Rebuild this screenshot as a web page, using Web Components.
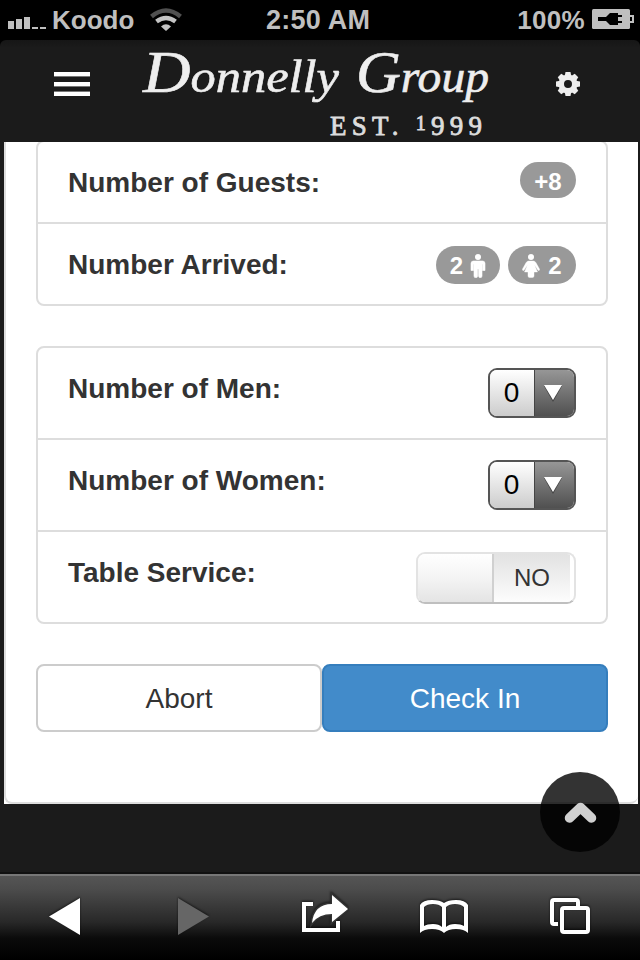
<!DOCTYPE html>
<html lang="en">
<head>
<meta charset="utf-8">
<title>Check In</title>
<style>
html,body{margin:0;padding:0}
body{width:640px;height:960px;overflow:hidden;background:#1b1b1b;font-family:"Liberation Sans",Arial,sans-serif;color:#333}
</style>
</head>
<body>
<guest-app></guest-app>
<script>
const define = (name, css, html) => customElements.define(name, class extends HTMLElement {
  constructor() {
    super();
    this.attachShadow({mode: 'open'}).innerHTML = `<style>*{box-sizing:border-box}svg{display:block;flex:none}${css}</style>${html}`;
  }
});

define('status-bar', `
:host{display:grid;grid-template-columns:266px 1fr auto;align-items:center;height:40px;background:#000;color:#bfbfbf;font:bold 26px/40px "Liberation Sans",sans-serif;padding:0 6px 0 0}
.l,.r{display:flex;align-items:center}
.l{padding-left:8px}.l svg+span{margin-left:6px;letter-spacing:0}.l span+svg{margin-left:16px}
.c{font-size:27px;letter-spacing:.25px}
.r{gap:7px}.r span{letter-spacing:.3px}`, `
<div class="l">
<svg width="38" height="40" fill="#bfbfbf"><path d="M0 21h6v8H0zM8 19h6v10H8zM16 17h6v12h-6zM24 27h6v2h-6zM32 27h6v2h-6z"/></svg>
<span>Koodo</span>
<svg width="32" height="40" fill="none"><path d="M1.500 16.500Q16 4.500 30.500 16.500" stroke="#505050" stroke-width="4.500"/><path d="M6.500 21.500Q16 14.500 25.500 21.500" stroke="#c4c4c4" stroke-width="4.500"/><path d="M11 26.500Q16 22 21 26.500L16 31z" fill="#c4c4c4"/></svg>
</div>
<div class="c">2:50 AM</div>
<div class="r"><span>100%</span>
<svg width="42" height="40"><rect y="9" width="38" height="20" rx="1.500" fill="#bfbfbf"/><path d="M38 16h3v6h-3" fill="none" stroke="#bfbfbf" stroke-width="2"/><path d="M6 17h8l4-4h8v2h4v2h-4v4h4v2h-4v2h-8l-4-4H6z" fill="#000"/></svg></div>`);

define('brand-logo', `:host{display:block;width:352px;height:96px}svg{overflow:visible}`, `
<svg width="352" height="96" fill="#eee" stroke="#eee" font-family="Liberation Serif, serif" font-style="italic">
<g stroke-width=".6"><text x="3" y="48" font-size="46" textLength="196" lengthAdjust="spacingAndGlyphs"><tspan font-size="60">D</tspan>onnelly</text>
<text x="216" y="48" font-size="46" textLength="133" lengthAdjust="spacingAndGlyphs"><tspan font-size="60">G</tspan>roup</text></g>
<text x="190" y="90.500" font-size="27" font-style="normal" fill="#ddd" stroke="#ddd" stroke-width=".8" textLength="152">EST. <tspan font-size="20" dy="-5">1</tspan><tspan dy="5">999</tspan></text>
</svg>`);

define('app-header', `
:host{display:grid;grid-template-columns:140px 352px 1fr;height:102px;background:linear-gradient(#161616,#1b1b1b 8px);border-radius:6px 6px 0 0}
.m{padding:32px 0 0 54px}.g{padding:30px 0 0 62px}brand-logo{margin-top:4px}`, `
<div class="m"><svg width="36" height="24"><path d="M0 0h36v4H0zM0 10h36v4H0zM0 20h36v4H0z" fill="#fff"/><path d="M0 4.500h36M0 14.500h36M0 19.500h36" stroke="#777"/></svg></div>
<brand-logo></brand-logo>
<div class="g"><svg width="28" height="28" viewBox="-14 -14 28 28"><g fill="#eee"><path d="M-2.500-12h5l.8 4h-6.600z"/><path d="M-2.500-12h5l.8 4h-6.600z" transform="rotate(45)"/><path d="M-2.500-12h5l.8 4h-6.600z" transform="rotate(90)"/><path d="M-2.500-12h5l.8 4h-6.600z" transform="rotate(135)"/><path d="M-2.500-12h5l.8 4h-6.600z" transform="rotate(180)"/><path d="M-2.500-12h5l.8 4h-6.600z" transform="rotate(225)"/><path d="M-2.500-12h5l.8 4h-6.600z" transform="rotate(270)"/><path d="M-2.500-12h5l.8 4h-6.600z" transform="rotate(315)"/></g><circle r="6.700" fill="none" stroke="#eee" stroke-width="5.400"/></svg></div>`);

define('list-group', `:host{display:block;border:2px solid #ddd;border-radius:8px;background:#fff}`, `<slot></slot>`);

define('list-row', `
:host{display:flex;justify-content:space-between;align-items:flex-start;height:92px;padding:20px 30px 0;border-top:2px solid #ddd}
:host(.first){border-top:0;height:90px}
:host(.short){height:82px}:host(.short.first){height:80px}
b{font-size:28px;line-height:42px;letter-spacing:0;white-space:nowrap}
.end{display:flex;gap:8px}`, `<b><slot name="label"></slot></b><div class="end"><slot></slot></div>`);

define('count-badge', `
:host{display:flex;align-items:center;justify-content:center;height:36px;min-width:56px;border-radius:20px;background:#999;color:#fff;font-size:24px;font-weight:bold;line-height:40px;padding-top:3px}
:host(.man){width:64px;height:38px;margin-top:2px;padding-top:1px}:host(.woman){width:68px;height:38px;margin-top:2px;padding-top:1px}`, `<slot></slot>`);

define('person-icon', `:host{display:block;width:18px;height:24px}:host([kind=man]){width:16px;margin-left:7px}:host([kind=woman]){margin-right:8px}.w{display:none}:host([kind=woman]) .w{display:block}:host([kind=woman]) .m{display:none}`, `
<svg class="m" width="16" height="24" fill="#fff"><circle cx="8" cy="3" r="3"/><path d="M3.500 7h9a2.500 2.500 0 0 1 2.500 2.500v7h-2.500v-6h-.5V22a1.700 1.700 0 0 1-3.400 0v-7h-1v7A1.700 1.700 0 0 1 4 22V10.500h-.5v6H1v-7A2.500 2.500 0 0 1 3.500 7z" stroke="#fff" stroke-width=".6"/></svg>
<svg class="w" width="18" height="24" fill="#fff"><circle cx="9" cy="3" r="3"/><path d="M6.500 7h5q1.500 0 2.500 1.800l3.600 6.400q.2 1.500-1.400 1.300L12.500 11l3 7h-3.500v4q-.2 1.500-1.500 1.500h-3Q6.200 23.500 6 22v-4H2.500l3-7-3.700 5.500Q.2 16.700.4 15.200L4 8.800Q5 7 6.500 7z" stroke="#fff" stroke-width=".4"/></svg>`);

define('select-box', `
:host{display:grid;grid-template-columns:44px 1fr;width:88px;height:50px;border:2px solid #555;border-radius:9px;overflow:hidden;font-size:28px;line-height:46px;color:#000}
.v{text-align:center;background:linear-gradient(#fff,#ccc);padding-right:1px}
.a{border-left:1px solid #444;background:linear-gradient(#969696,#505050);padding:14px 0 0 8px}`, `
<div class="v"><slot></slot></div><div class="a"><svg width="20" height="20"><path d="M1 2h18l-9 16z" fill="#444"/><path d="M1 1h18L10 16z" fill="#fff"/></svg></div>`);

define('toggle-switch', `
:host{display:grid;grid-template-columns:76px 76px 1fr;width:160px;height:52px;border:2px solid #e3e3e3;border-bottom-color:#bfbfbf;border-radius:9px;overflow:hidden;background:#fff;font-size:24px;line-height:48px;text-align:center}
.k{background:linear-gradient(#fff,#f4f4f4 50%,#e4e4e4);border-right:2px solid #d0d0d0}
.n{background:linear-gradient(#e2e2e2,#fdfdfd)}`, `<div class="k"></div><div class="n"><slot></slot></div>`);

define('action-button', `
:host{display:block;flex:1;height:68px;border:2px solid #ccc;border-radius:8px;background:#fff;text-align:center;font-size:28px;line-height:66px;color:#333}
:host([primary]){background:#428bca;border-color:#357ebd;color:#fff}`, `<slot></slot>`);

define('scroll-top', `
:host{position:absolute;left:540px;top:772px;width:80px;height:80px;border-radius:50%;background:rgba(0,0,0,.8)}`, `
<svg width="80" height="80"><path d="M29.500 46L40.500 35.500 51.500 46" fill="none" stroke="#d0d0d0" stroke-width="9.500" stroke-linecap="round" stroke-linejoin="round"/></svg>`);

define('tool-bar', `
:host{display:grid;grid-template-columns:128px 128px 128px 120px 132px;height:88px;border-top:2px solid #111;background:linear-gradient(#777 0 2px,#555 2px,#4c4c4c 15px,#282828 48px,#0b0b0b 64px,#000)}
div{display:flex;justify-content:center;padding-top:18px}
svg{filter:drop-shadow(0 -1px 1px #0009)}`, `
<div><svg width="50" height="50"><path d="M10 24.500L41 6v37z" fill="#fff"/></svg></div>
<div><svg width="50" height="50"><path d="M11 6l31 18.500L11 43z" fill="#666"/></svg></div>
<div><svg width="56" height="50"><path d="M21 12H12V38H46V29" fill="none" stroke="#fff" stroke-width="4"/><path d="M20 31Q22 12 40 12V3L56 17 40 30V22Q27 22 20 31z" fill="#fff" stroke="#333" stroke-width="3" paint-order="stroke"/></svg></div>
<div><svg width="50" height="50"><path d="M1 41V13Q4 8 13 8 21 8 25 11 29 8 37 8 46 8 49 13V41Q45 37 37 37 29 37 25 41 21 37 13 37 5 37 1 41zM5 34Q8 32 14 32 20 32 23 35V15Q20 12 14 12 8 12 5 15zM27 35Q30 32 36 32 42 32 45 34V15Q42 12 36 12 30 12 27 15z" fill="#fff" fill-rule="evenodd"/></svg></div>
<div><svg width="44" height="50" fill="none" stroke="#fff" stroke-width="4"><path d="M10 32H6Q4 32 4 30V10Q4 8 6 8H28Q30 8 30 10V14"/><rect x="14" y="16" width="26" height="24" rx="2"/></svg></div>`);

define('guest-app', `
:host{display:grid;grid-template-rows:40px 102px 730px 88px;width:640px;height:960px;position:relative;background:linear-gradient(#000 0 50px,#1b1b1b 50px)}
status-bar,app-header{position:relative;z-index:1}
.page{width:634px;height:664px;margin:-2px 0 0 4px;background:#fff}
.panel{height:664px;border-left:2px solid #ddd;border-bottom:2px solid #ddd;border-radius:0 0 8px 8px;padding:0 30px;display:flex;flex-direction:column;gap:40px}
.buttons{display:flex}`, `
<status-bar></status-bar><app-header></app-header>
<div class="page"><div class="panel">
<list-group>
<list-row class="short first"><span slot="label">Number of Guests:</span><count-badge>+8</count-badge></list-row>
<list-row class="short"><span slot="label">Number Arrived:</span><count-badge class="man">2<person-icon kind="man"></person-icon></count-badge><count-badge class="woman"><person-icon kind="woman"></person-icon>2</count-badge></list-row>
</list-group>
<list-group>
<list-row class="first"><span slot="label">Number of Men:</span><select-box>0</select-box></list-row>
<list-row><span slot="label">Number of Women:</span><select-box>0</select-box></list-row>
<list-row><span slot="label">Table Service:</span><toggle-switch>NO</toggle-switch></list-row>
</list-group>
<div class="buttons"><action-button>Abort</action-button><action-button primary>Check In</action-button></div>
</div></div>
<tool-bar></tool-bar><scroll-top></scroll-top>`);
</script>
</body>
</html>
